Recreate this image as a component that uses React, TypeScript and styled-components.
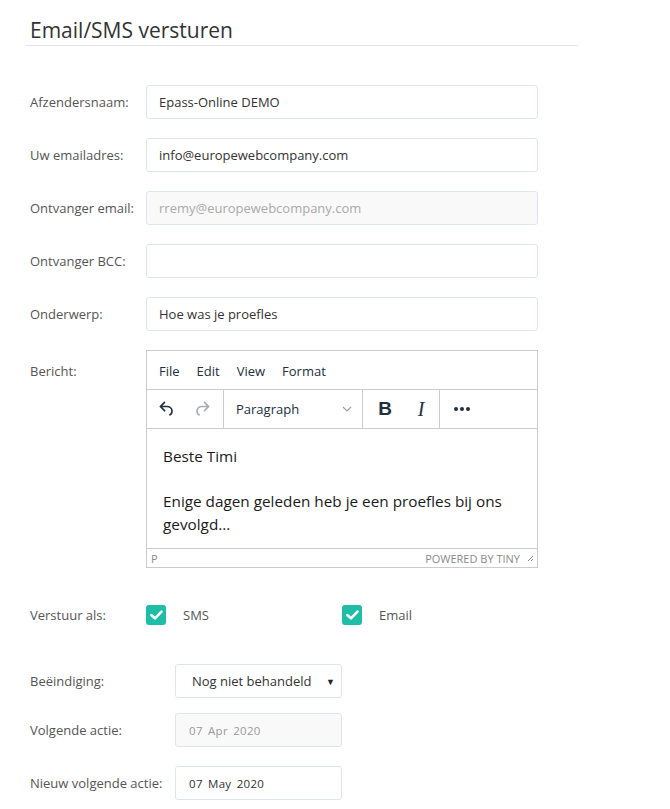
import React from "react";
import styled, { createGlobalStyle } from "styled-components";

const Global = createGlobalStyle`
  html, body { margin: 0; padding: 0; background: #fff; }
  body { font-family: "Open Sans", "Noto Sans", sans-serif; color: #555; }
  * { box-sizing: border-box; }
`;

const Page = styled.div`
  padding: 16px 0 0 30px;
  width: 670px;
`;

const Title = styled.h1`
  margin: 0;
  font-size: 21px;
  font-weight: 400;
  color: #333;
  line-height: 28px;
  padding-bottom: 1px;
`;

const Rule = styled.div`
  margin-left: -5px;
  width: 553px;
  height: 1px;
  background: #e3e6ea;
  margin-bottom: 39px;
`;

const Form = styled.div`
  display: flex;
  flex-direction: column;
`;

const Row = styled.div<{ $labelW: number; $gap: number; $align?: string }>`
  display: grid;
  grid-template-columns: ${(p) => p.$labelW}px auto;
  align-items: ${(p) => p.$align || "center"};
  margin-bottom: ${(p) => p.$gap}px;
`;

const Label = styled.label<{ $top?: number }>`
  font-size: 13px;
  color: #555;
  padding-top: ${(p) => p.$top || 0}px;
`;

const Input = styled.div<{ $disabled?: boolean; $w: number }>`
  width: ${(p) => p.$w}px;
  height: 34px;
  border: 1px solid #dfe5ef;
  border-radius: 3px;
  background: ${(p) => (p.$disabled ? "#f9f9f9" : "#fff")};
  color: ${(p) => (p.$disabled ? "#aaa" : "#333")};
  font-size: 13px;
  display: flex;
  align-items: center;
  padding: 0 12px;
`;

const DateText = styled.span<{ $disabled?: boolean }>`
  font-size: 11.5px;
  letter-spacing: 0.3px;
  word-spacing: 2px;
  color: ${(p) => (p.$disabled ? "#999" : "#333")};
  padding-left: 1px;
`;

const Select = styled(Input)`
  justify-content: space-between;
  padding: 0 6px 0 16px;
  font-size: 13px;
  color: #333;
`;

const Caret = styled.span`
  font-size: 9px;
  color: #222;
`;

/* Editor */
const Editor = styled.div`
  width: 392px;
  height: 218px;
  border: 1px solid #ccc;
  display: flex;
  flex-direction: column;
  font-family: "Open Sans", "Noto Sans", sans-serif;
`;

const MenuBar = styled.div`
  flex-shrink: 0;
  height: 39px;
  border-bottom: 1px solid #ccc;
  display: flex;
  align-items: center;
  padding: 2px 0 0 8px;
`;

const MenuItem = styled.span`
  font-size: 13px;
  color: #222f3e;
  padding: 0 4px;
  margin-right: 9px;
`;

const Toolbar = styled.div`
  flex-shrink: 0;
  height: 39px;
  border-bottom: 1px solid #ccc;
  display: flex;
`;

const Group = styled.div<{ $w: number; $last?: boolean }>`
  width: ${(p) => p.$w}px;
  border-right: ${(p) => (p.$last ? "none" : "1px solid #ccc")};
  display: flex;
  align-items: center;
`;

const ToolBtn = styled.span<{ $w: number }>`
  width: ${(p) => p.$w}px;
  display: flex;
  align-items: center;
  justify-content: center;
  height: 100%;
  color: #222f3e;
`;

const Dropdown = styled.span`
  flex: 1;
  display: flex;
  align-items: center;
  justify-content: space-between;
  padding: 0 10px 0 12px;
  font-size: 13px;
  color: #222f3e;
`;

const BoldGlyph = styled.span`
  font-family: "Liberation Sans", Arial, sans-serif;
  font-weight: 700;
  font-size: 19px;
  color: #222f3e;
`;

const ItalicGlyph = styled.span`
  font-family: "Liberation Serif", "Times New Roman", serif;
  font-style: italic;
  font-size: 20px;
  color: #222f3e;
`;

const Content = styled.div`
  flex: 1;
  min-height: 0;
  overflow: hidden;
  padding: 16px 16px 0 16px;
  font-size: 15.3px;
  line-height: 23px;
  color: #1a1a1a;
`;

const Para = styled.p`
  margin: 0 0 22px 0;
`;

const StatusBar = styled.div`
  flex-shrink: 0;
  height: 19px;
  border-top: 1px solid #ccc;
  display: flex;
  align-items: center;
  justify-content: space-between;
  padding: 0 3px 0 4px;
  font-size: 11px;
  color: #8a8a8a;
`;

const Powered = styled.span`
  display: flex;
  align-items: center;
  gap: 6px;
  text-transform: uppercase;
`;

const CheckGroup = styled.div`
  display: grid;
  grid-template-columns: 196px auto;
  align-items: center;
`;

const CheckItem = styled.div`
  display: flex;
  align-items: center;
  gap: 17px;
  font-size: 13px;
  color: #555;
`;

const Box = styled.span`
  width: 20px;
  height: 20px;
  border-radius: 3px;
  background: #1dbea5;
  display: flex;
  align-items: center;
  justify-content: center;
`;

const Check = () => (
  <Box>
    <svg width="13" height="10" viewBox="0 0 13 10">
      <path d="M1.5 5.2 L5 8.4 L11.5 1.6" fill="none" stroke="#fff" strokeWidth="2.6" strokeLinecap="round" strokeLinejoin="round" />
    </svg>
  </Box>
);

export default function App() {
  return (
    <Page>
      <Global />
      <Title>Email/SMS versturen</Title>
      <Rule />
      <Form>
        <Row $labelW={116} $gap={19}>
          <Label>Afzendersnaam:</Label>
          <Input $w={392}>Epass-Online DEMO</Input>
        </Row>
        <Row $labelW={116} $gap={19}>
          <Label>Uw emailadres:</Label>
          <Input $w={392}>info@europewebcompany.com</Input>
        </Row>
        <Row $labelW={116} $gap={19}>
          <Label>Ontvanger email:</Label>
          <Input $w={392} $disabled>rremy@europewebcompany.com</Input>
        </Row>
        <Row $labelW={116} $gap={19}>
          <Label>Ontvanger BCC:</Label>
          <Input $w={392}></Input>
        </Row>
        <Row $labelW={116} $gap={19}>
          <Label>Onderwerp:</Label>
          <Input $w={392}>Hoe was je proefles</Input>
        </Row>
        <Row $labelW={116} $gap={37} $align="start">
          <Label $top={12}>Bericht:</Label>
          <Editor>
            <MenuBar>
              <MenuItem>File</MenuItem>
              <MenuItem>Edit</MenuItem>
              <MenuItem>View</MenuItem>
              <MenuItem>Format</MenuItem>
            </MenuBar>
            <Toolbar>
              <Group $w={77}>
                <ToolBtn $w={40}>
                  <svg width="20" height="20" viewBox="0 0 24 24">
                    <path d="M6.4 8H12c3.7 0 6.2 2 6.8 5.1.6 2.7-.4 5.6-2.8 6.8a1 1 0 0 1-1-1.8c1.6-.8 2.2-2.7 1.9-4.6-.4-2.2-2-3.5-4.9-3.5H6.4l3.3 3.3a1 1 0 1 1-1.4 1.4l-5-5a1 1 0 0 1 0-1.4l5-5a1 1 0 0 1 1.4 1.4L6.4 8z" fill="#222f3e" />
                  </svg>
                </ToolBtn>
                <ToolBtn $w={30}>
                  <svg width="20" height="20" viewBox="0 0 24 24">
                    <path d="M17.6 10H12c-2.8 0-4.4 1.4-4.9 3.5-.4 1.9.3 3.8 1.9 4.6a1 1 0 1 1-1 1.8c-2.4-1.2-3.4-4.1-2.8-6.8.6-3 3.1-5.1 6.8-5.1h5.6l-3.3-3.3a1 1 0 1 1 1.4-1.4l5 5a1 1 0 0 1 0 1.4l-5 5a1 1 0 0 1-1.4-1.4l3.3-3.3z" fill="#a7adb4" />
                  </svg>
                </ToolBtn>
              </Group>
              <Group $w={139}>
                <Dropdown>
                  Paragraph
                  <svg width="10" height="6" viewBox="0 0 10 6">
                    <path d="M1 1 L5 5 L9 1" fill="none" stroke="#9aa0a6" strokeWidth="1.2" />
                  </svg>
                </Dropdown>
              </Group>
              <Group $w={77}>
                <ToolBtn $w={44}>
                  <BoldGlyph>B</BoldGlyph>
                </ToolBtn>
                <ToolBtn $w={28}>
                  <ItalicGlyph>I</ItalicGlyph>
                </ToolBtn>
              </Group>
              <Group $w={44} $last>
                <ToolBtn $w={44}>
                  <svg width="18" height="6" viewBox="0 0 18 6">
                    <circle cx="3" cy="3" r="2" fill="#222f3e" />
                    <circle cx="9" cy="3" r="2" fill="#222f3e" />
                    <circle cx="15" cy="3" r="2" fill="#222f3e" />
                  </svg>
                </ToolBtn>
              </Group>
            </Toolbar>
            <Content>
              <Para>Beste Timi</Para>
              <Para>Enige dagen geleden heb je een proefles bij ons gevolgd...</Para>
            </Content>
            <StatusBar>
              <span>P</span>
              <Powered>
                Powered by Tiny
                <svg width="8" height="8" viewBox="0 0 8 8">
                  <path d="M7 2 L2 7 M7 5 L5 7" stroke="#888" strokeWidth="1" />
                </svg>
              </Powered>
            </StatusBar>
          </Editor>
        </Row>
        <Row $labelW={116} $gap={39}>
          <Label>Verstuur als:</Label>
          <CheckGroup>
            <CheckItem>
              <Check />
              SMS
            </CheckItem>
            <CheckItem>
              <Check />
              Email
            </CheckItem>
          </CheckGroup>
        </Row>
        <Row $labelW={145} $gap={15}>
          <Label>Beëindiging:</Label>
          <Select $w={167}>
            Nog niet behandeld
            <Caret>▼</Caret>
          </Select>
        </Row>
        <Row $labelW={145} $gap={19}>
          <Label>Volgende actie:</Label>
          <Input $w={167} $disabled>
            <DateText $disabled>07 Apr 2020</DateText>
          </Input>
        </Row>
        <Row $labelW={145} $gap={0}>
          <Label>Nieuw volgende actie:</Label>
          <Input $w={167}>
            <DateText>07 May 2020</DateText>
          </Input>
        </Row>
      </Form>
    </Page>
  );
}
